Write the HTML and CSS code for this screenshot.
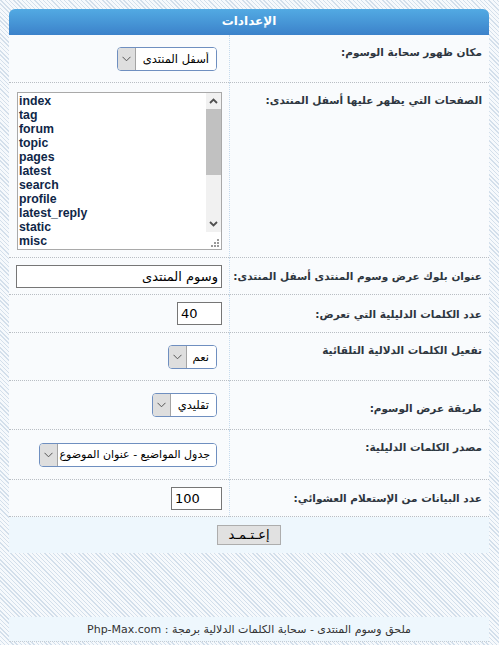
FILE: index.html
```html
<!DOCTYPE html>
<html lang="ar" dir="rtl">
<head>
<meta charset="utf-8">
<title>الإعدادات</title>
<link rel="stylesheet" href="styles.css">
</head>
<body>
<div class="panel">
  <div class="panel-head">الإعدادات</div>
  <table class="settings">
    <colgroup><col class="c-lbl"><col class="c-val"></colgroup>
    <tr class="r1">
      <td class="lbl top">مكان ظهور سحابة الوسوم:</td>
      <td class="val">
        <span class="sel w100"><select><option>أسفل المنتدى</option></select><span class="arrow"><svg width="9" height="6" viewBox="0 0 9 6"><path d="M0.5 0.8 L4.5 4.8 L8.5 0.8" fill="none" stroke="#555" stroke-width="1"/></svg></span></span>
      </td>
    </tr>
    <tr class="r2">
      <td class="lbl top">الصفحات التي يظهر عليها أسفل المنتدى:</td>
      <td class="val top">
        <div class="listbox" dir="ltr">
          <textarea class="pages" dir="ltr">index
tag
forum
topic
pages
latest
search
profile
latest_reply
static
misc
memberlist
groups
calendar
faq
viewonline
register
login
privmsg
modcp
album
gallery</textarea>
          <div class="vscroll">
            <span class="sb-btn"><svg width="9" height="6" viewBox="0 0 9 6"><path d="M1 5 L4.5 1.5 L8 5" fill="none" stroke="#505050" stroke-width="1.8"/></svg></span>
            <span class="sb-track"><span class="sb-thumb"></span></span>
            <span class="sb-btn"><svg width="9" height="6" viewBox="0 0 9 6"><path d="M1 1 L4.5 4.5 L8 1" fill="none" stroke="#505050" stroke-width="1.8"/></svg></span>
            <span class="sb-corner"><svg width="9" height="9" viewBox="0 0 9 9"><rect x="7" y="1" width="2" height="2" fill="#9a9a9a"/><rect x="4" y="4" width="2" height="2" fill="#9a9a9a"/><rect x="7" y="4" width="2" height="2" fill="#9a9a9a"/><rect x="1" y="7" width="2" height="2" fill="#9a9a9a"/><rect x="4" y="7" width="2" height="2" fill="#9a9a9a"/><rect x="7" y="7" width="2" height="2" fill="#9a9a9a"/></svg></span>
          </div>
        </div>
      </td>
    </tr>
    <tr class="r3">
      <td class="lbl">عنوان بلوك عرض وسوم المنتدى أسفل المنتدى:</td>
      <td class="val"><input class="txt wide" type="text" value="وسوم المنتدى"></td>
    </tr>
    <tr class="r4">
      <td class="lbl">عدد الكلمات الدليلية التي تعرض:</td>
      <td class="val"><input class="txt num w45" type="text" value="40" dir="ltr"></td>
    </tr>
    <tr class="r5">
      <td class="lbl top">تفعيل الكلمات الدلالية التلقائية</td>
      <td class="val">
        <span class="sel w49"><select><option>نعم</option></select><span class="arrow"><svg width="9" height="6" viewBox="0 0 9 6"><path d="M0.5 0.8 L4.5 4.8 L8.5 0.8" fill="none" stroke="#555" stroke-width="1"/></svg></span></span>
      </td>
    </tr>
    <tr class="r6">
      <td class="lbl low">طريقة عرض الوسوم:</td>
      <td class="val">
        <span class="sel w65"><select><option>تقليدي</option></select><span class="arrow"><svg width="9" height="6" viewBox="0 0 9 6"><path d="M0.5 0.8 L4.5 4.8 L8.5 0.8" fill="none" stroke="#555" stroke-width="1"/></svg></span></span>
      </td>
    </tr>
    <tr class="r7">
      <td class="lbl top">مصدر الكلمات الدليلية:</td>
      <td class="val">
        <span class="sel w178"><select class="small"><option>جدول المواضيع - عنوان الموضوع</option></select><span class="arrow"><svg width="9" height="6" viewBox="0 0 9 6"><path d="M0.5 0.8 L4.5 4.8 L8.5 0.8" fill="none" stroke="#555" stroke-width="1"/></svg></span></span>
      </td>
    </tr>
    <tr class="r8">
      <td class="lbl">عدد البيانات من الإستعلام العشوائي:</td>
      <td class="val"><input class="txt num w51" type="text" value="100" dir="ltr"></td>
    </tr>
  </table>
  <div class="actions"><button class="submit" type="button">إعـتـمـد</button></div>
</div>
<div class="footer">ملحق وسوم المنتدى - سحابة الكلمات الدلالية برمجة : Php-Max.com</div>
</body>
</html>
```

FILE: styles.css
```css
html {
  background: repeating-linear-gradient(45deg, #d3dfeb 0 1px, #f6f9fc 1px 3px);
  min-height: 100%;
}
body {
  margin: 0;
  padding: 9px 10px 0 9px;
  font-family: "DejaVu Sans", Tahoma, sans-serif;
  color: #2e3640;
}
.panel {
  width: 480px;
}
.panel-head {
  height: 26px;
  line-height: 25px;
  border-radius: 6px 6px 0 0;
  background: linear-gradient(#52aae3, #3c82ca);
  color: #fff;
  font-weight: bold;
  font-size: 12px;
  text-align: center;
}
.settings {
  width: 480px;
  table-layout: fixed;
  border-collapse: separate;
  border-spacing: 0;
}
.c-lbl { width: 260px; }
.c-val { width: 220px; }
.settings td {
  background: #f9fbfd;
  border-bottom: 1px dotted #b9bec4;
  padding: 0;
  box-sizing: border-box;
}
.lbl {
  border-left: 1px dotted #c6dbee;
  font-size: 10.5px;
  font-weight: bold;
  padding: 0 7px 0 2px !important;
  vertical-align: middle;
  line-height: 14px;
  white-space: nowrap;
}
.lbl.top {
  vertical-align: top;
  padding-top: 10px !important;
}
.lbl.low {
  vertical-align: middle;
  padding-top: 5px !important;
}
.val {
  vertical-align: middle;
  padding-right: 7px !important;
  padding-left: 7px !important;
}
.val.top { vertical-align: top; padding-top: 9px !important; }
.r1 { height: 48px; }
.r2 { height: 175px; }
.r3 { height: 37px; }
.r4 { height: 38px; }
.r5 { height: 48px; }
.r6 { height: 49px; }
.r7 { height: 50px; }
.r8 { height: 37px; }

.sel {
  display: flex;
  height: 24px;
  box-sizing: border-box;
  border: 1px solid #6f8fc0;
  border-radius: 4px;
  background: #fff;
  margin-right: 5px;
  overflow: hidden;
}
.sel select {
  flex: 1;
  min-width: 0;
  -webkit-appearance: none;
  appearance: none;
  border: none;
  background: #fff;
  font-family: "DejaVu Sans", Tahoma, sans-serif;
  font-size: 11.5px;
  color: #000;
  padding: 0 7px 0 2px;
  height: 22px;
  outline: none;
}
.sel select.small {
  font-size: 11px;
  padding: 0 6px 0 0;
}
.sel .arrow {
  width: 17px;
  flex: none;
  background: #dedede;
  border-right: 1px solid #a4a4a4;
  display: flex;
  align-items: center;
  justify-content: center;
}
.w100 { width: 100px; }
.w49 { width: 49px; }
.w65 { width: 65px; }
.w178 { width: 178px; }

.txt {
  box-sizing: border-box;
  height: 23px;
  border: 1px solid #767676;
  background: #fff;
  font-family: "DejaVu Sans", Tahoma, sans-serif;
  font-size: 13px;
  color: #000;
  padding: 0 3px;
  margin: 0;
  display: block;
}
.txt.wide { width: 206px; }
.txt.num { text-align: left; }
.w45 { width: 45px; }
.w51 { width: 51px; }

.listbox {
  display: flex;
  box-sizing: border-box;
  width: 205px;
  height: 158px;
  border: 1px solid #a9a9a9;
  background: #fff;
}
.pages {
  flex: 1;
  min-width: 0;
  display: block;
  box-sizing: border-box;
  height: 100%;
  margin: 0;
  border: none;
  background: #fff;
  font-family: "Liberation Sans", Arial, sans-serif;
  font-weight: bold;
  font-size: 12.3px;
  line-height: 14px;
  color: #0f2748;
  padding: 1px 1px;
  resize: none;
  overflow: hidden;
  outline: none;
}
.vscroll {
  width: 15px;
  flex: none;
  display: flex;
  flex-direction: column;
  background: #f1f1f1;
}
.sb-btn {
  height: 16px;
  flex: none;
  display: flex;
  align-items: center;
  justify-content: center;
}
.sb-track {
  flex: 1;
  display: flex;
  flex-direction: column;
}
.sb-thumb {
  height: 66px;
  background: #c1c1c1;
}
.sb-corner {
  height: 17px;
  flex: none;
  background: #fff;
  display: flex;
  align-items: flex-end;
  justify-content: flex-end;
  padding: 0 2px 2px 0;
  box-sizing: border-box;
}

.actions {
  height: 36px;
  background: #eef7fd;
  display: flex;
  align-items: center;
  justify-content: center;
}
.submit {
  width: 64px;
  height: 20px;
  box-sizing: border-box;
  background: #e1e1e1;
  border: 1px solid #adadad;
  font-family: "DejaVu Sans", Tahoma, sans-serif;
  font-size: 13px;
  color: #000;
  padding: 0;
  line-height: 16px;
}

.footer {
  width: 480px;
  margin-top: 64px;
  height: 24px;
  line-height: 25px;
  background: #eef7fd;
  border-bottom: 1px dotted #c5ccd4;
  text-align: center;
  font-size: 11px;
  color: #333;
}
```
